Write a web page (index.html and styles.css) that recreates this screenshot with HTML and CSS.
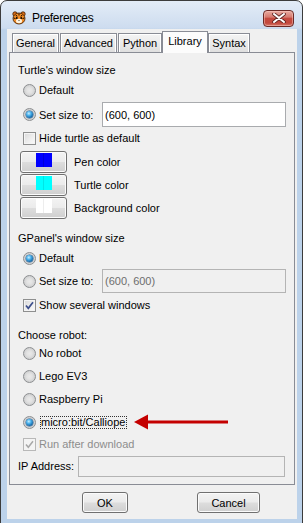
FILE: index.html
```html
<!DOCTYPE html>
<html>
<head>
<meta charset="utf-8">
<title>Preferences</title>
<link rel="stylesheet" href="styles.css">
</head>
<body>
<div class="window">
  <div class="titlebar">
    <svg class="appicon" width="14" height="14" viewBox="0 0 14 14">
      <circle cx="3" cy="3" r="2.2" fill="#e0701a" stroke="#3a1a00" stroke-width="0.8"/>
      <circle cx="11" cy="3" r="2.2" fill="#e0701a" stroke="#3a1a00" stroke-width="0.8"/>
      <ellipse cx="7" cy="7.5" rx="6" ry="5.5" fill="#f08a24" stroke="#3a1a00" stroke-width="0.8"/>
      <path d="M7 2.5 L7 4.5 M4 4 L5 5.5 M10 4 L9 5.5 M1.5 7 L3.5 7.5 M12.5 7 L10.5 7.5" stroke="#1a0a00" stroke-width="1"/>
      <ellipse cx="7" cy="10" rx="3" ry="2.2" fill="#fff4e0"/>
      <circle cx="4.8" cy="7" r="0.9" fill="#000"/>
      <circle cx="9.2" cy="7" r="0.9" fill="#000"/>
      <path d="M6.2 9.2 L7.8 9.2 L7 10.2 Z" fill="#000"/>
    </svg>
    <span class="title">Preferences</span>
    <div class="close">
      <svg width="14" height="10" viewBox="0 0 14 10">
        <path d="M2 1 L12 9 M12 1 L2 9" stroke="#5b2420" stroke-width="3.6" stroke-linecap="round"/>
        <path d="M2 1 L12 9 M12 1 L2 9" stroke="#ffffff" stroke-width="2" stroke-linecap="round"/>
      </svg>
    </div>
  </div>
  <div class="client">
    <div class="tabs">
      <div class="tab t-general">General</div>
      <div class="tab t-advanced">Advanced</div>
      <div class="tab t-python">Python</div>
      <div class="tab active t-library">Library</div>
      <div class="tab t-syntax">Syntax</div>
    </div>
    <div class="panel">
      <div class="heading mt9">Turtle's window size</div>
      <div class="opt mt2"><span class="radio"></span><span class="lbl">Default</span></div>
      <div class="opt fieldrow h25 mt2"><span class="radio on"></span><span class="lbl sizelbl">Set size to:</span><div class="field">(600, 600)</div></div>
      <div class="opt check mt2"><span class="box"></span><span class="lbl">Hide turtle as default</span></div>
      <div class="colorrow mt4"><div class="cbtn"><span class="swatch sw-blue"></span></div><span class="clbl">Pen color</span></div>
      <div class="colorrow mt1"><div class="cbtn"><span class="swatch sw-cyan"></span></div><span class="clbl">Turtle color</span></div>
      <div class="colorrow mt1"><div class="cbtn"><span class="swatch sw-white"></span></div><span class="clbl">Background color</span></div>

      <div class="heading mt11">GPanel's window size</div>
      <div class="opt mt2"><span class="radio on"></span><span class="lbl">Default</span></div>
      <div class="opt fieldrow mt1"><span class="radio"></span><span class="lbl sizelbl">Set size to:</span><div class="field disabled">(600, 600)</div></div>
      <div class="opt check mt3"><span class="box"><svg width="11" height="11" viewBox="0 0 11 11"><path d="M2 5.5 L4.3 8.3 L9 2.2" fill="none" stroke="#3d4f8c" stroke-width="1.7"/></svg></span><span class="lbl">Show several windows</span></div>

      <div class="heading mt13">Choose robot:</div>
      <div class="opt"><span class="radio"></span><span class="lbl">No robot</span></div>
      <div class="opt mt3"><span class="radio"></span><span class="lbl">Lego EV3</span></div>
      <div class="opt mt3"><span class="radio"></span><span class="lbl">Raspberry Pi</span></div>
      <div class="opt mt3"><span class="radio on"></span><span class="lbl focus">micro:bit/Calliope</span>
        <svg class="arrow" width="95" height="16" viewBox="0 0 95 16">
          <polygon points="0,8 14,0.5 14,15.5" fill="#c40000"/>
          <rect x="13" y="6.5" width="81" height="3" fill="#c40000"/>
        </svg>
      </div>
      <div class="opt check mt3"><span class="box off"><svg width="11" height="11" viewBox="0 0 11 11"><path d="M2 5.5 L4.3 8.3 L9 2.2" fill="none" stroke="#a8a8a8" stroke-width="1.5"/></svg></span><span class="lbl dim">Run after download</span></div>
      <div class="iprow mt2"><span class="iplbl">IP Address:</span><div class="field disabled ipfield"></div></div>
    </div>
    <div class="buttons">
      <div class="btn ok">OK</div>
      <div class="btn cancel">Cancel</div>
    </div>
  </div>
</div>
</body>
</html>
```

FILE: styles.css
```css
* { box-sizing: border-box; }
html, body { margin: 0; padding: 0; overflow: hidden; background: #ffffff; }
body {
  width: 305px;
  height: 523px;
  font-family: "Liberation Sans", Arial, sans-serif;
  font-size: 11px;
  color: #000;
}

.window {
  width: 303px;
  height: 540px;
  border: 1px solid #3c3c3c;
  border-radius: 7px 7px 0 0;
  background: linear-gradient(to bottom, #e3ecf7 0, #cddcef 27px, #bcd2ea 29px, #bcd2ea 100%);
  padding: 0 5px 0 6px;
  display: flex;
  flex-direction: column;
}

/* title bar */
.titlebar {
  height: 28px;
  flex: none;
  display: flex;
  align-items: center;
  padding: 6px 3px 0 5px;
}
.appicon { flex: none; }
.title {
  margin-left: 6px;
  font-size: 12px;
  letter-spacing: -0.3px;
  color: #000;
  flex: 1;
}
.close {
  width: 31px;
  height: 17px;
  border: 1px solid #6b2a26;
  border-radius: 4px;
  background: linear-gradient(to bottom, #e9aba1 0, #d67b70 40%, #c54a3f 50%, #c2483d 80%, #d47a6c 100%);
  display: flex;
  align-items: center;
  justify-content: center;
  box-shadow: inset 0 0 0 1px rgba(255, 210, 200, 0.45);
}

/* client */
.client {
  width: 290px;
  height: 490px;
  flex: none;
  background: #f0f0f0;
  display: flex;
  flex-direction: column;
}

.tabs {
  margin-top: 2px;
  height: 21px;
  display: flex;
  align-items: flex-end;
  padding-left: 5px;
  position: relative;
  z-index: 1;
}
.tab {
  height: 19px;
  border: 1px solid #898c95;
  border-bottom: none;
  background: linear-gradient(to bottom, #f4f4f4 0, #ebebeb 50%, #dfdfdf 100%);
  box-shadow: inset 1px 1px 0 #ffffff, inset -1px 0 0 #ffffff;
  display: flex;
  align-items: center;
  justify-content: center;
  margin-right: 1px;
  padding-bottom: 1px;
}
.tab.active {
  height: 22px;
  margin-bottom: -1px;
  margin-left: -1px;
  margin-right: 0;
  background: #fcfcfc;
  box-shadow: none;
  padding-bottom: 3px;
}
.t-general { width: 47px; }
.t-advanced { width: 57px; }
.t-python { width: 44px; }
.t-library { width: 46px; }
.t-syntax { width: 42px; }

.panel {
  margin: 0 2px;
  border: 1px solid #898c95;
  background: #f0f0f0;
  display: flex;
  flex-direction: column;
  padding-bottom: 7px;
}

.mt1 { margin-top: 1px; }
.mt2 { margin-top: 2px; }
.mt3 { margin-top: 3px; }
.mt4 { margin-top: 4px; }
.mt9 { margin-top: 9px; }
.mt11 { margin-top: 11px; }
.mt13 { margin-top: 13px; }

.heading {
  height: 16px;
  line-height: 16px;
  padding-left: 8px;
}

.opt {
  height: 20px;
  display: flex;
  align-items: center;
  padding-left: 13px;
}
.opt.check { height: 18px; }
.fieldrow { height: 24px; }
.fieldrow.h25 { height: 25px; }

.lbl { margin-left: 3px; white-space: nowrap; }
.lbl.dim { color: #8d8d8d; }
.lbl.focus {
  margin-left: 4px;
  border: 1px dotted #333;
  line-height: 11px;
  padding: 0 1px 0 0;
}
.sizelbl { width: 63px; }

.radio {
  width: 13px;
  height: 13px;
  border-radius: 50%;
  border: 1px solid #8c8e90;
  background: radial-gradient(circle at 50% 50%, #e9e9e9 0, #e2e2e2 35%, #cfd0d1 70%, #f3f3f3 100%);
  display: flex;
  align-items: center;
  justify-content: center;
  flex: none;
}
.radio.on::after {
  content: "";
  width: 7px;
  height: 7px;
  border-radius: 50%;
  background: radial-gradient(circle at 40% 35%, #c8efff 0, #48b0ec 35%, #10609f 75%, #0b4a82 100%);
  box-shadow: 0 0 0 0.5px #2a5d8c;
}

.box {
  width: 13px;
  height: 13px;
  border: 1px solid #8e8f8f;
  background: linear-gradient(135deg, #d8d8d8 0, #ececec 50%, #fbfbfb 100%);
  box-shadow: inset 0 0 0 1px #f4f4f4;
  display: flex;
  align-items: center;
  justify-content: center;
  flex: none;
}
.box.off {
  border-color: #b8b8b8;
  background: #f4f4f4;
}

.field {
  width: 184px;
  height: 100%;
  border: 1px solid #a9abae;
  background: #ffffff;
  display: flex;
  align-items: center;
  padding-left: 2px;
  margin-left: 0;
}
.field.disabled {
  background: #f0f0f0;
  border-color: #b4b4b4;
  color: #6d6d6d;
}

.colorrow {
  height: 22px;
  display: flex;
  align-items: center;
  padding-left: 10px;
}
.cbtn {
  width: 47px;
  height: 22px;
  border: 1px solid #707070;
  border-radius: 3px;
  background: linear-gradient(to bottom, #f3f3f3 0, #ebebeb 48%, #dddddd 52%, #cfcfcf 100%);
  box-shadow: inset 0 0 0 1px #fbfbfb;
  display: flex;
  justify-content: center;
  align-items: flex-start;
  padding-top: 1px;
}
.swatch {
  width: 16px;
  height: 14px;
  display: block;
}
.sw-blue { background: linear-gradient(90deg, #0000ff 0, #0000ff 7px, #0000d8 7px, #0000d8 8px, #0000ff 8px); }
.sw-cyan { background: linear-gradient(90deg, #00ffff 0, #00ffff 7px, #00e6e6 7px, #00e6e6 8px, #00ffff 8px); }
.sw-white { background: linear-gradient(90deg, #ffffff 0, #ffffff 7px, #ededed 7px, #ededed 8px, #ffffff 8px); }
.clbl { margin-left: 7px; }

.arrow { margin-left: 7px; flex: none; }

.iprow {
  height: 22px;
  display: flex;
  align-items: center;
  padding-left: 8px;
}
.iplbl { width: 60px; }
.ipfield { width: 207px; height: 21px; }

.buttons {
  display: flex;
  margin-top: 7px;
  padding-left: 75px;
}
.btn {
  height: 21px;
  border: 1px solid #707070;
  border-radius: 3px;
  background: linear-gradient(to bottom, #f3f3f3 0, #ebebeb 48%, #dddddd 52%, #cfcfcf 100%);
  box-shadow: inset 0 0 0 1px #fbfbfb;
  display: flex;
  align-items: center;
  justify-content: center;
}
.ok { width: 46px; }
.cancel { width: 63px; margin-left: 69px; }
```
